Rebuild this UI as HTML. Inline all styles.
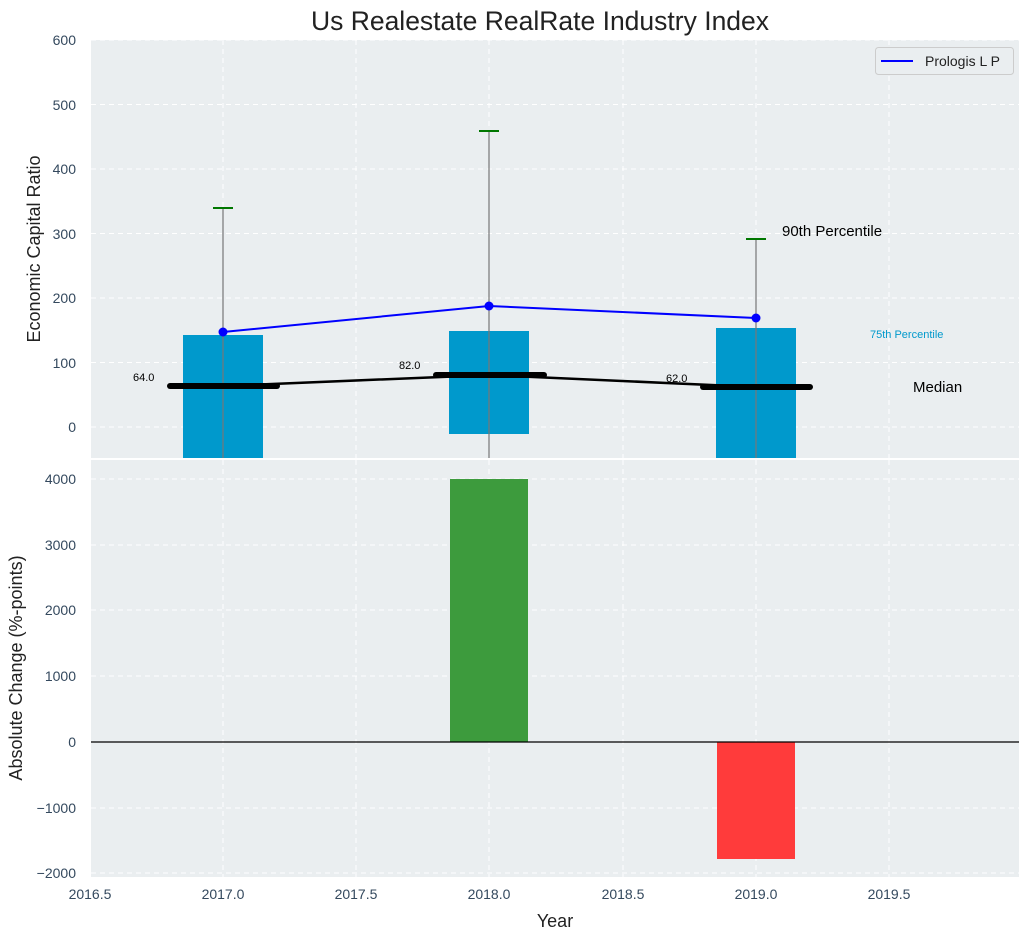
<!DOCTYPE html>
<html><head><meta charset="utf-8"><style>
html,body{margin:0;padding:0;background:#fff;}
svg text{font-family:"Liberation Sans",sans-serif;}
</style></head><body>
<svg width="1029" height="940" xmlns="http://www.w3.org/2000/svg">
<rect width="1029" height="940" fill="#fff"/>
<text x="540" y="30" font-size="26.5" text-anchor="middle" fill="#222">Us Realestate RealRate Industry Index</text>
<rect x="91" y="40" width="928" height="418" fill="#eaeef0"/>
<g stroke="#fff" stroke-dasharray="5,4" stroke-width="1">
<line x1="223" y1="40" x2="223" y2="458"/><line x1="489" y1="40" x2="489" y2="458"/><line x1="756" y1="40" x2="756" y2="458"/>
<line x1="356" y1="40" x2="356" y2="458"/><line x1="623" y1="40" x2="623" y2="458"/><line x1="889" y1="40" x2="889" y2="458"/>
<line x1="91" y1="40" x2="1019" y2="40"/><line x1="91" y1="104.5" x2="1019" y2="104.5"/><line x1="91" y1="169" x2="1019" y2="169"/>
<line x1="91" y1="233.5" x2="1019" y2="233.5"/><line x1="91" y1="298" x2="1019" y2="298"/><line x1="91" y1="362.5" x2="1019" y2="362.5"/><line x1="91" y1="427" x2="1019" y2="427"/>
</g>
<g font-size="14" fill="#34495e" text-anchor="end">
<text x="76" y="45">600</text><text x="76" y="110">500</text><text x="76" y="174">400</text><text x="76" y="239">300</text><text x="76" y="303">200</text><text x="76" y="368">100</text><text x="76" y="432">0</text>
</g>
<text transform="translate(40,249) rotate(-90)" font-size="18" text-anchor="middle" fill="#222">Economic Capital Ratio</text>
<rect x="183" y="335" width="80" height="123" fill="#0099cc"/>
<rect x="449" y="331" width="80" height="103" fill="#0099cc"/>
<rect x="716" y="328" width="80" height="130" fill="#0099cc"/>
<g stroke="#777" stroke-width="1.2">
<line x1="223" y1="208" x2="223" y2="458"/><line x1="489" y1="131" x2="489" y2="458"/><line x1="756" y1="239" x2="756" y2="458"/>
</g>
<g stroke="#007700" stroke-width="2">
<line x1="213" y1="208" x2="233" y2="208"/><line x1="479" y1="131" x2="499" y2="131"/><line x1="746" y1="239" x2="766" y2="239"/>
</g>
<polyline points="223,386 489,375 756,387" fill="none" stroke="#000" stroke-width="2.5"/>
<g stroke="#000" stroke-width="6" stroke-linecap="round">
<line x1="170" y1="386" x2="277" y2="386"/><line x1="436" y1="375" x2="544" y2="375"/><line x1="703" y1="387" x2="810" y2="387"/>
</g>
<g font-size="11" fill="#000"><text x="133" y="381">64.0</text><text x="399" y="369">82.0</text><text x="666" y="382">62.0</text></g>
<polyline points="223,332 489,306 756,318" fill="none" stroke="#0000ff" stroke-width="2"/>
<g fill="#0000ff"><circle cx="223" cy="332" r="4.5"/><circle cx="489" cy="306" r="4.5"/><circle cx="756" cy="318" r="4.5"/></g>
<text x="782" y="236" font-size="15" fill="#000">90th Percentile</text>
<text x="870" y="338" font-size="11" fill="#0099cc">75th Percentile</text>
<text x="913" y="392" font-size="15" fill="#000">Median</text>
<rect x="875.5" y="47.5" width="138" height="27" rx="3" fill="#eaeef0" stroke="#ccc"/>
<line x1="881" y1="61" x2="913" y2="61" stroke="#0000ff" stroke-width="2"/>
<text x="925" y="66" font-size="14" fill="#222">Prologis L P</text>
<rect x="91" y="460" width="928" height="417" fill="#eaeef0"/>
<g stroke="#fff" stroke-dasharray="5,4" stroke-width="1">
<line x1="223" y1="460" x2="223" y2="877"/><line x1="489" y1="460" x2="489" y2="877"/><line x1="756" y1="460" x2="756" y2="877"/>
<line x1="356" y1="460" x2="356" y2="877"/><line x1="623" y1="460" x2="623" y2="877"/><line x1="889" y1="460" x2="889" y2="877"/>
<line x1="91" y1="479" x2="1019" y2="479"/><line x1="91" y1="545" x2="1019" y2="545"/><line x1="91" y1="610" x2="1019" y2="610"/>
<line x1="91" y1="676" x2="1019" y2="676"/><line x1="91" y1="808" x2="1019" y2="808"/><line x1="91" y1="873" x2="1019" y2="873"/>
</g>
<g font-size="14" fill="#34495e" text-anchor="end">
<text x="76" y="484">4000</text><text x="76" y="550">3000</text><text x="76" y="615">2000</text><text x="76" y="681">1000</text><text x="76" y="747">0</text><text x="76" y="813">−1000</text><text x="76" y="878">−2000</text>
</g>
<text transform="translate(22,668) rotate(-90)" font-size="18" text-anchor="middle" fill="#222">Absolute Change (%-points)</text>
<rect x="450" y="479" width="78" height="263" fill="#3d9b3d"/>
<rect x="717" y="742" width="78" height="117" fill="#ff3b3b"/>
<line x1="91" y1="742" x2="1019" y2="742" stroke="#000" stroke-width="1.2"/>
<g font-size="14" fill="#34495e" text-anchor="middle">
<text x="90" y="899">2016.5</text><text x="223" y="899">2017.0</text><text x="356" y="899">2017.5</text><text x="489" y="899">2018.0</text><text x="623" y="899">2018.5</text><text x="756" y="899">2019.0</text><text x="889" y="899">2019.5</text>
</g>
<text x="555" y="927" font-size="18" text-anchor="middle" fill="#222">Year</text>
</svg>
</body></html>
